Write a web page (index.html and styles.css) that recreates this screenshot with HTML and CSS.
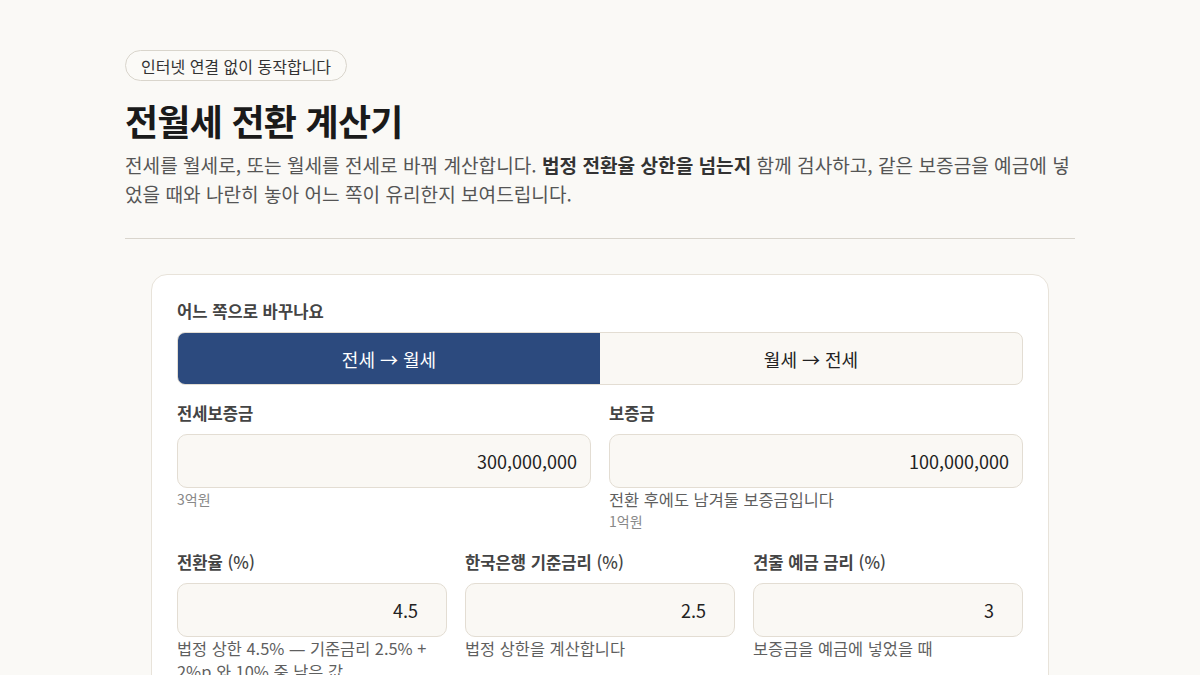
FILE: index.html
```html
<!DOCTYPE html>
<html lang="ko">
<head>
<meta charset="utf-8">
<title>전월세 전환 계산기</title>
<link rel="stylesheet" href="styles.css">
</head>
<body>
<main class="page">
  <header class="intro">
    <span class="badge">인터넷 연결 없이 동작합니다</span>
    <h1 class="title">전월세 전환 계산기</h1>
    <p class="lead">전세를 월세로, 또는 월세를 전세로 바꿔 계산합니다. <strong>법정 전환율 상한을 넘는지</strong> 함께 검사하고, 같은 보증금을 예금에 넣었을 때와 나란히 놓아 어느 쪽이 유리한지 보여드립니다.</p>
  </header>
  <hr class="divider">
  <section class="card">
    <div class="field">
      <div class="label">어느 쪽으로 바꾸나요</div>
      <div class="toggle">
        <button class="toggle-btn is-active" type="button">전세 → 월세</button>
        <button class="toggle-btn" type="button">월세 → 전세</button>
      </div>
    </div>
    <div class="row row-2">
      <div class="field">
        <label class="label" for="jeonse">전세보증금</label>
        <input class="input" id="jeonse" type="text" value="300,000,000">
        <div class="sub">3억원</div>
      </div>
      <div class="field">
        <label class="label" for="deposit">보증금</label>
        <input class="input" id="deposit" type="text" value="100,000,000">
        <div class="hint">전환 후에도 남겨둘 보증금입니다</div>
        <div class="sub">1억원</div>
      </div>
    </div>
    <div class="row row-3">
      <div class="field">
        <label class="label" for="rate">전환율 <span class="unit">(%)</span></label>
        <input class="input" id="rate" type="number" value="4.5" step="0.1">
        <div class="hint">법정 상한 4.5% <span class="dash">—</span> 기준금리 2.5% + 2%p 와 10% 중 낮은 값</div>
      </div>
      <div class="field">
        <label class="label" for="base">한국은행 기준금리 <span class="unit">(%)</span></label>
        <input class="input" id="base" type="number" value="2.5" step="0.1">
        <div class="hint">법정 상한을 계산합니다</div>
      </div>
      <div class="field">
        <label class="label" for="saving">견줄 예금 금리 <span class="unit">(%)</span></label>
        <input class="input" id="saving" type="number" value="3" step="0.1">
        <div class="hint">보증금을 예금에 넣었을 때</div>
      </div>
    </div>
  </section>
</main>
</body>
</html>
```
FILE: styles.css
```css
* { box-sizing: border-box; }
html, body { margin: 0; padding: 0; }
body {
  background: #faf9f6;
  color: #1f1f1f;
  font-family: "Noto Sans CJK KR", "Noto Sans", sans-serif;
}
.page {
  width: 950px;
  margin: 0 auto;
  padding: 50px 0 40px;
}
.intro { display: flex; flex-direction: column; align-items: flex-start; }
.badge {
  display: inline-flex;
  align-items: center;
  height: 31px;
  padding: 0 15px;
  border: 1px solid #d9d5cc;
  border-radius: 999px;
  font-size: 16px;
  color: #333;
  background: #fbfaf7;
}
.title {
  margin: 18px 0 0;
  font-size: 36px;
  line-height: 43px;
  font-weight: 700;
  letter-spacing: -0.75px;
  color: #1a1a1a;
}
.lead {
  margin: 9px 0 0;
  font-size: 19.1px;
  line-height: 29px;
  color: #555;
}
.lead strong { color: #333; font-weight: 700; }
.divider {
  margin: 29px 0 0;
  border: 0;
  border-top: 1px solid #d9d5cd;
}
.card {
  width: 898px;
  margin: 35px auto 0;
  padding: 24px 25px;
  background: #fff;
  border: 1px solid #e8e3da;
  border-radius: 16px;
}
.field { display: flex; flex-direction: column; min-width: 0; }
.label {
  display: block;
  font-size: 16.6px;
  line-height: 24px;
  font-weight: 700;
  color: #444;
  margin-bottom: 9px;
}
.unit { font-weight: 500; }
.toggle {
  display: flex;
  height: 53px;
  border: 1px solid #e3ddd3;
  border-radius: 8px;
  overflow: hidden;
  background: #faf8f4;
}
.toggle-btn {
  flex: 1;
  border: 0;
  margin: 0;
  font: inherit;
  font-size: 18px;
  color: #222;
  background: transparent;
}
.toggle-btn.is-active { background: #2c4a7e; color: #fff; }
.row { display: grid; gap: 18px; }
.row-2 { grid-template-columns: 1fr 1fr; margin-top: 16px; }
.row-3 { grid-template-columns: 1fr 1fr 1fr; margin-top: 18px; }
.input {
  width: 100%;
  height: 54px;
  padding: 0 13px;
  border: 1px solid #e3ddd3;
  border-radius: 10px;
  background: #faf8f4;
  font: inherit;
  font-size: 18px;
  color: #222;
  text-align: right;
}
.hint {
  font-size: 16.4px;
  line-height: 22px;
  color: #5f5f5f;
}
.dash { font-family: "Noto Sans", sans-serif; }
.sub {
  font-size: 14px;
  line-height: 22px;
  color: #888;
}
```
